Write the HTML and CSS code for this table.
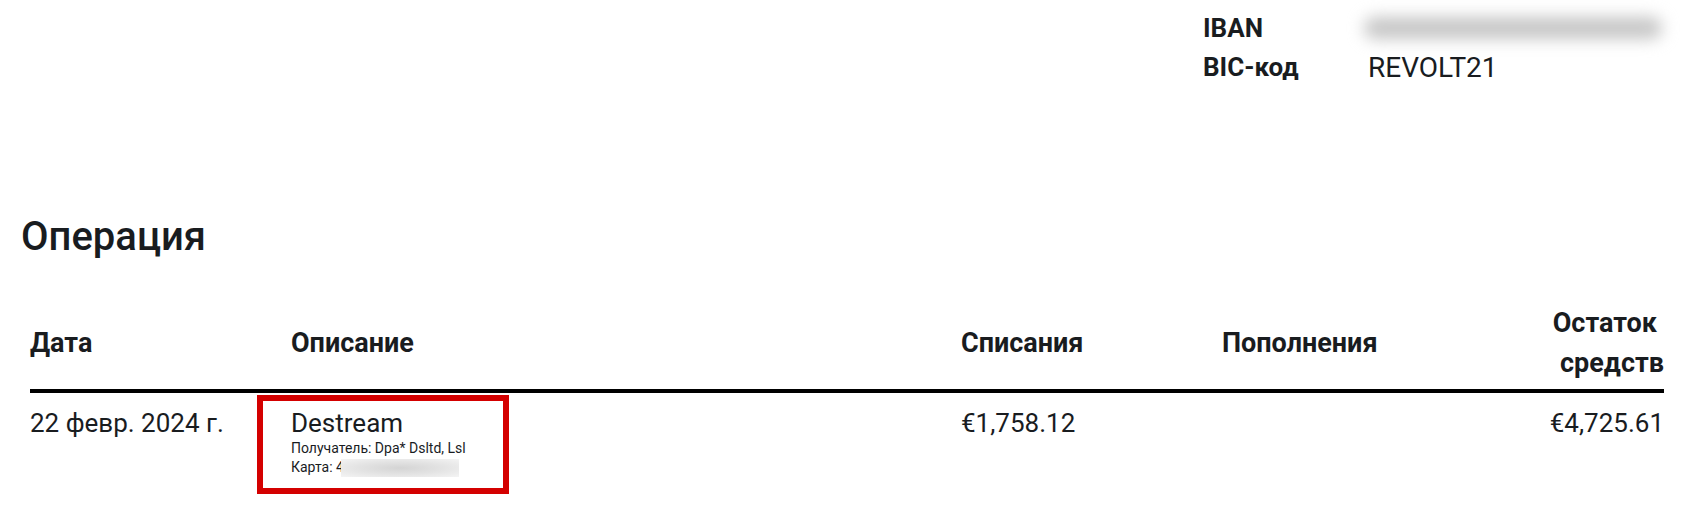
FILE: index.html
```html
<!DOCTYPE html>
<html lang="ru">
<head>
<meta charset="utf-8">
<title>Операция</title>
<link rel="stylesheet" href="styles.css">
</head>
<body>
<div class="page">
  <div class="top">
    <div class="account">
      <div class="label">IBAN</div>
      <div class="value"><span class="blur-iban"></span></div>
      <div class="label">BIC-код</div>
      <div class="value">REVOLT21</div>
    </div>
  </div>

  <h2 class="title">Операция</h2>

  <div class="table">
    <div class="row thead">
      <div class="cell">Дата</div>
      <div class="cell">Описание</div>
      <div class="cell">Списания</div>
      <div class="cell">Пополнения</div>
      <div class="cell right"><span class="l1">Остаток</span><span class="l2">средств</span></div>
    </div>
    <div class="row tbody">
      <div class="cell">22 февр. 2024 г.</div>
      <div class="cell">
        <div class="highlight">
          <div class="desc-main">Destream</div>
          <div class="desc-sub">Получатель: Dpa* Dsltd, Lsl</div>
          <div class="desc-sub">Карта: 4<span class="blur-card"></span></div>
        </div>
      </div>
      <div class="cell">€1,758.12</div>
      <div class="cell"></div>
      <div class="cell right">€4,725.61</div>
    </div>
  </div>
</div>
</body>
</html>
```

FILE: styles.css
```css
html, body {
  margin: 0;
  padding: 0;
  background: #ffffff;
}

body {
  font-family: Roboto, "Noto Sans", "Liberation Sans", sans-serif;
  color: #191c1f;
}

.page {
  width: 1700px;
  height: 523px;
  overflow: hidden;
}

.top {
  display: flex;
  justify-content: flex-start;
  padding-top: 9px;
}

.account {
  margin-left: 1203px;
  display: grid;
  grid-template-columns: 165px 310px;
  font-size: 26px;
  line-height: 39px;
}

.account .label {
  font-weight: 700;
}

.account .value {
  font-weight: 400;
  font-size: 28px;
}

.blur-iban {
  display: block;
  width: 298px;
  height: 22px;
  margin: 8px 0 0 -4px;
  background: #c6c6c6;
  border-radius: 11px;
  filter: blur(8px);
}

.title {
  margin: 126px 0 0 21px;
  font-size: 40px;
  line-height: 47px;
  font-weight: 500;
}

.table {
  margin: 43px 0 0 30px;
  width: 1634px;
}

.row {
  display: grid;
  grid-template-columns: 261px 670px 261px 1fr auto;
}

.thead {
  align-items: center;
  font-size: 27px;
  line-height: 40px;
  font-weight: 700;
  padding-bottom: 6px;
  border-bottom: 4px solid #000;
}

.thead .right {
  display: flex;
  flex-direction: column;
  align-items: flex-end;
}

.thead .l1 {
  padding-right: 7px;
}

.right {
  text-align: right;
}

.tbody {
  align-items: start;
  font-size: 26px;
  line-height: 32px;
  font-weight: 400;
}

.tbody > .cell {
  padding-top: 14px;
}

.tbody > .cell:nth-child(2) {
  padding-top: 0;
}

.highlight {
  box-sizing: border-box;
  width: 252px;
  margin: 2px 0 0 -34px;
  padding: 6px 0 11px 28px;
  border: 6px solid #d40000;
}

.desc-main {
  font-size: 26px;
  line-height: 32px;
}

.desc-sub {
  font-size: 14px;
  line-height: 19px;
  white-space: nowrap;
}

.blur-card {
  display: inline-block;
  width: 118px;
  height: 18px;
  margin-left: -3px;
  vertical-align: -5px;
  background: radial-gradient(ellipse at center, #d4d4d4 0%, #e3e3e3 50%, #f4f4f4 100%);
}
```
